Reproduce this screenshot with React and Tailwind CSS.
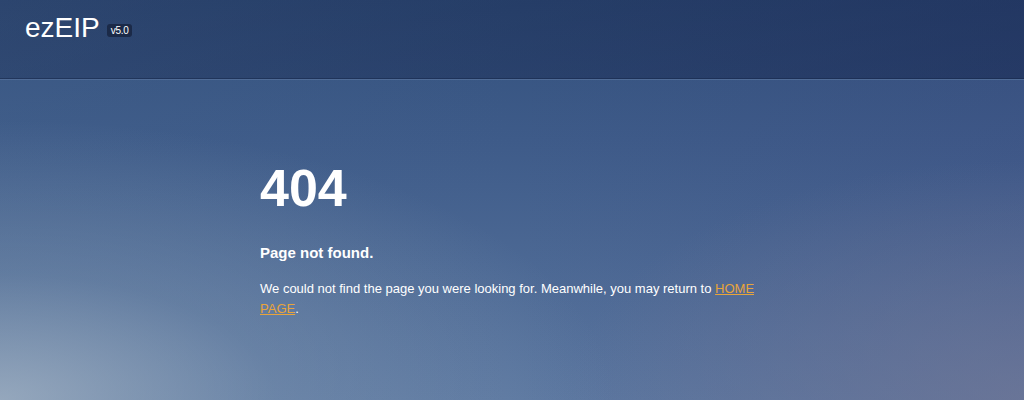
import React from 'react'

export default function App() {
  return (
    <div
      className="relative h-[400px] w-full overflow-hidden bg-[#3a5684] font-['Liberation_Sans',Arial,sans-serif] text-white"
    >
      {/* background layers */}
      <div className="absolute inset-0 bg-[linear-gradient(to_bottom,#32507c_0%,#3e5b89_35%,#5b77a0_100%)]" />
      <div className="absolute inset-0 bg-[linear-gradient(to_right,rgba(70,100,140,0.25)_0%,rgba(40,70,130,0)_50%,rgba(60,60,120,0.15)_100%)]" />
      <div className="absolute inset-0 bg-[radial-gradient(ellipse_60%_70%_at_0%_100%,rgba(170,185,200,0.75)_0%,rgba(150,170,190,0.3)_45%,rgba(150,170,190,0)_100%)]" />
      <div className="absolute inset-0 bg-[radial-gradient(ellipse_45%_60%_at_100%_100%,rgba(115,120,150,0.65)_0%,rgba(115,120,150,0)_100%)]" />

      <div className="relative flex h-full flex-col">
        <header className="flex h-[80px] items-start border-b border-[#4f6b96] bg-[linear-gradient(to_right,rgba(24,40,78,0.35),rgba(18,34,74,0.5))] px-[25px] shadow-[0_-1px_0_rgba(20,35,70,0.5)_inset]">
          <div className="mt-[12px] flex items-center">
            <span className="text-[28px] leading-[32px] text-white">ezEIP</span>
            <span className="ml-[7px] mt-[4px] rounded-[3px] bg-[#1b2a48] px-[4px] text-[10px] leading-[13px] tracking-[-0.3px] text-white">v5.0</span>
          </div>
        </header>

        <main className="mx-auto w-[504px] pt-[82px]">
          <h1 className="text-[52px] font-bold leading-none">404</h1>
          <h2 className="mt-[29px] text-[15px] font-bold leading-[20px]">Page not found.</h2>
          <p className="mt-[16px] text-[13px] leading-[20px] text-white">
            We could not find the page you were looking for. Meanwhile, you may return to{' '}
            <a href="#" className="text-[#e8a43a] underline">HOME PAGE</a>.
          </p>
        </main>
      </div>
    </div>
  )
}
